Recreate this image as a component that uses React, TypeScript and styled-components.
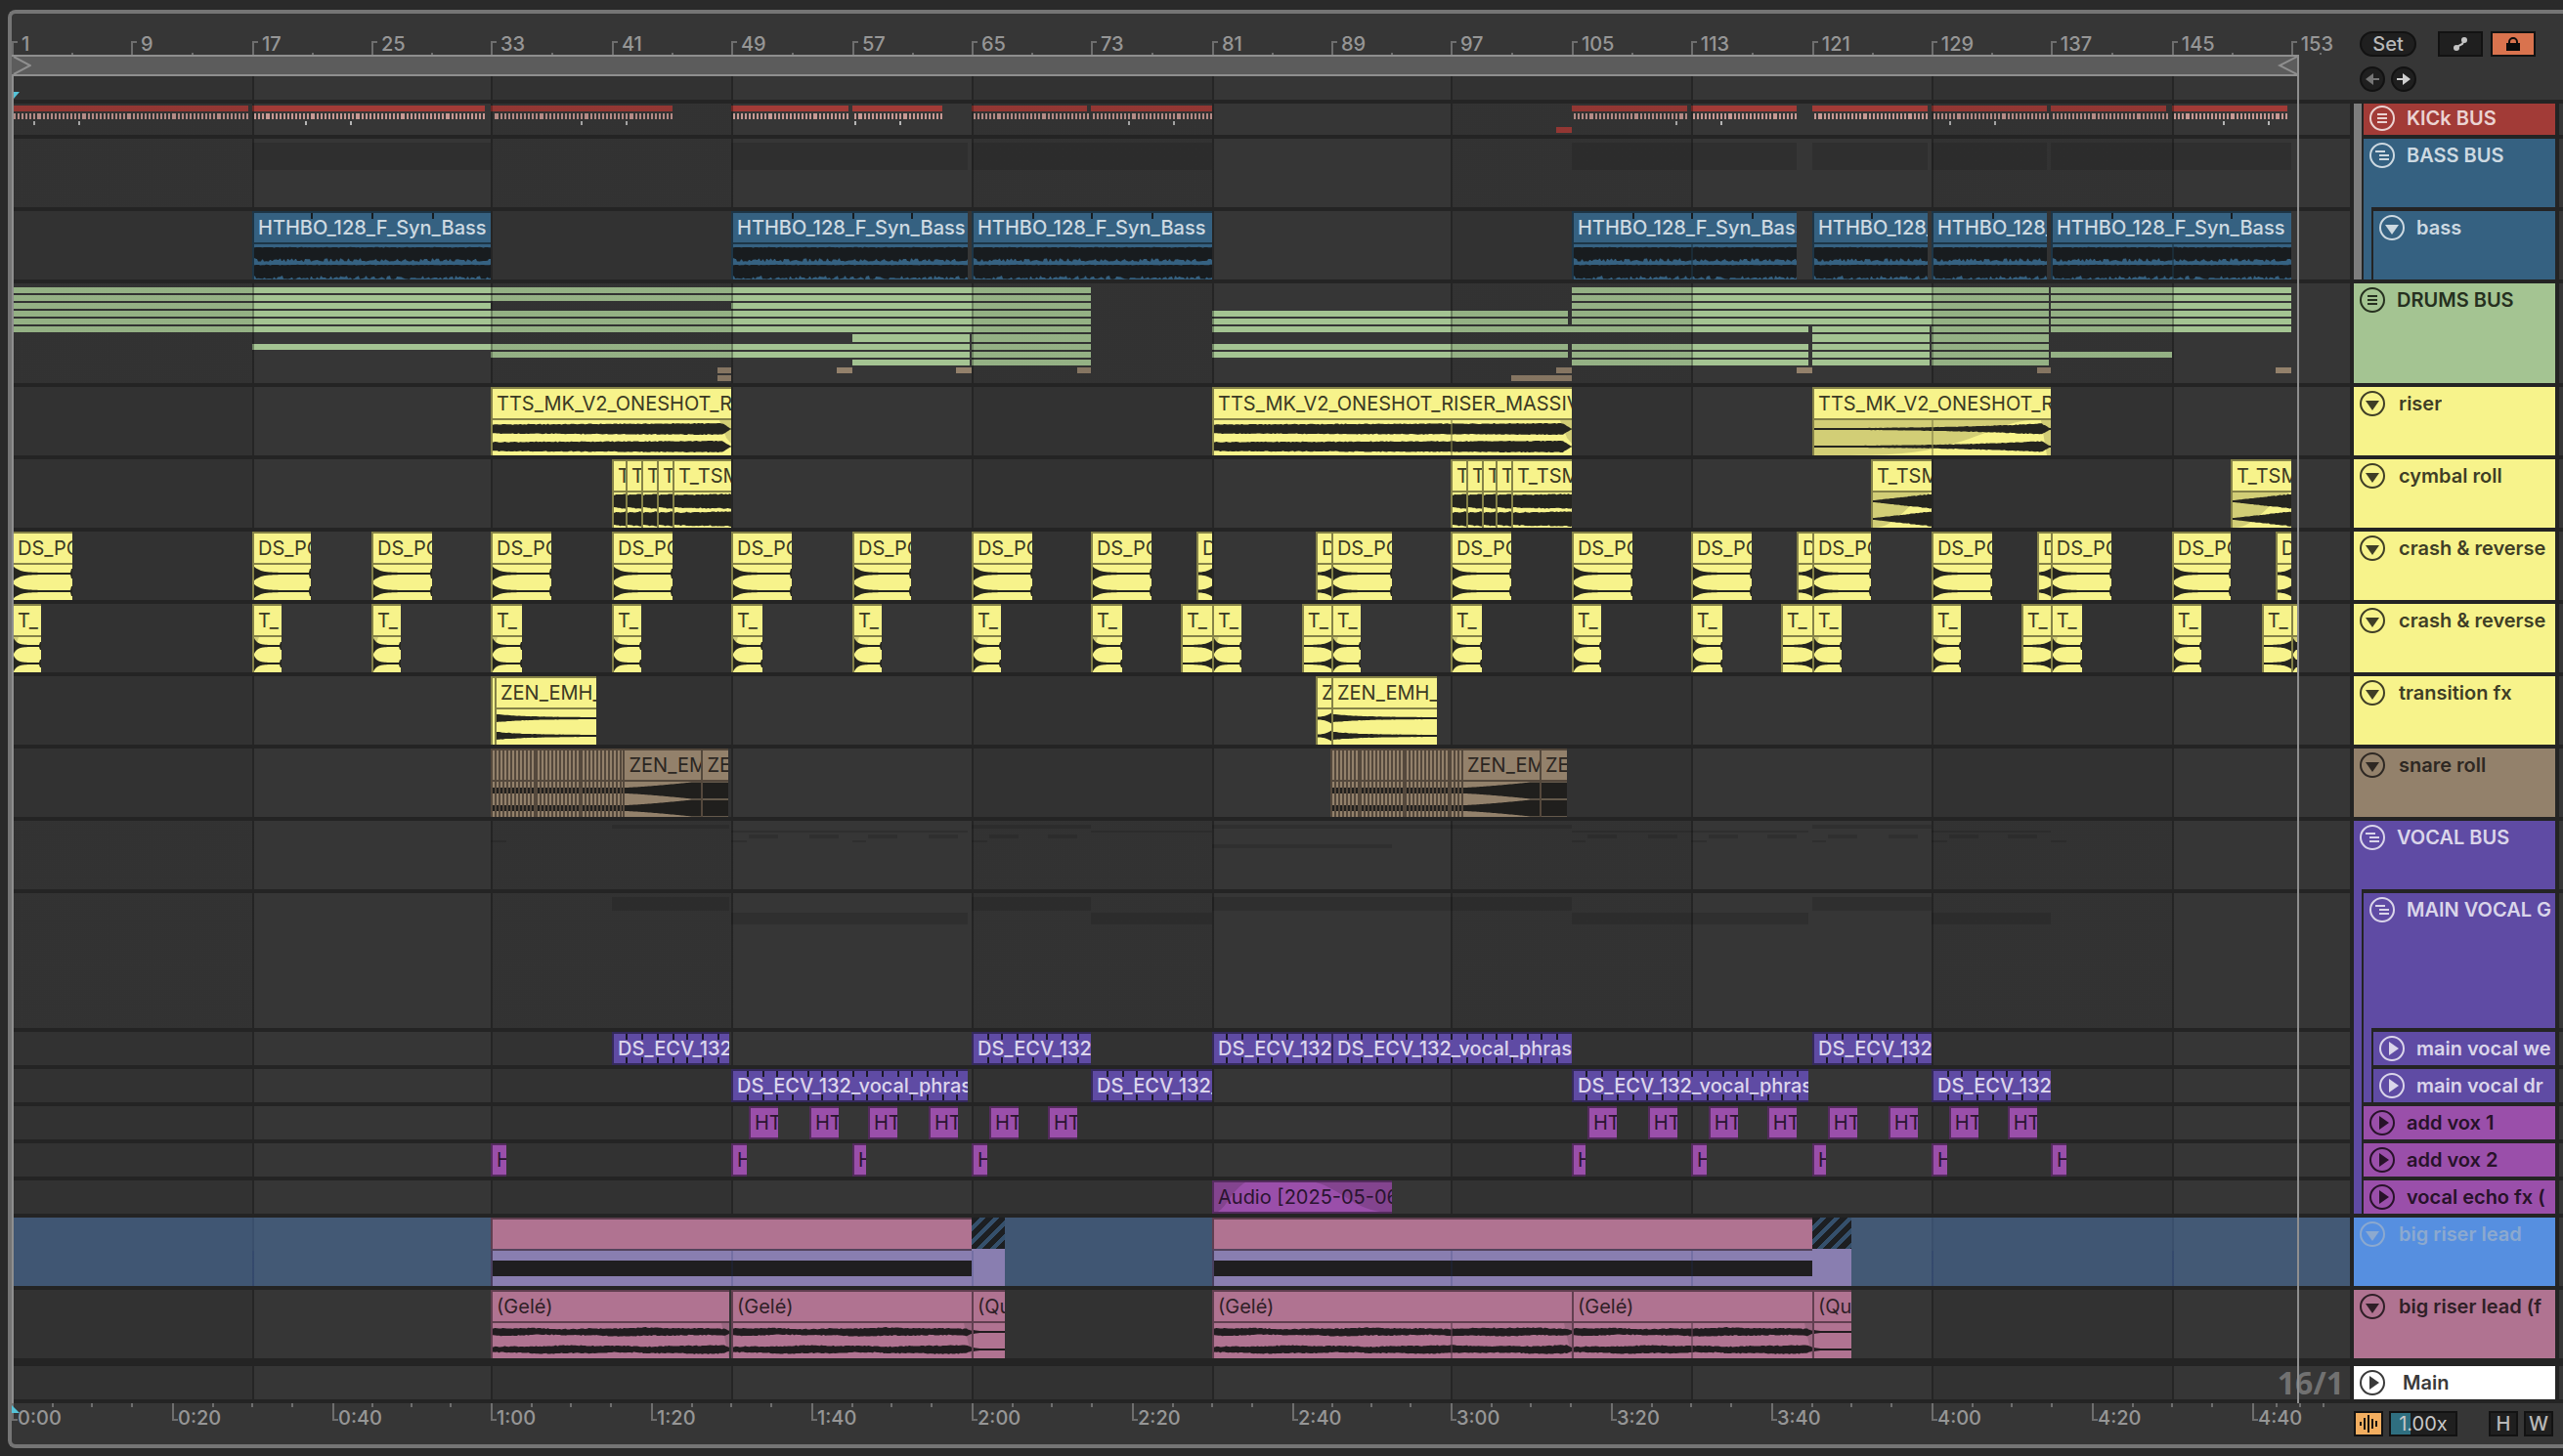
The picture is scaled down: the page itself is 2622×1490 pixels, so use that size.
import React from 'react';
import styled, { createGlobalStyle } from 'styled-components';

/* ---------- time scale ---------- */

const LANE = 2392;
const BAR = 15.34375;
const px = (bar: number) => Math.floor((0.5 + (bar - 1) * BAR) / 2 + 0.2) * 2;
const pct = (n: number) => `${(n / LANE) * 100}%`;

/* ---------- palette ---------- */

const c = {
  page: '#2a2a2a',
  panel: '#363636',
  dim: '#323232',
  gap: '#242424',
  frame: '#757575',
  edge: '#8f8f8f',
  label: '#969696',
  red: '#a23b37',
  blue: '#356181',
  green: '#a4c492',
  yellow: '#f7f38b',
  brown: '#93816b',
  purple: '#5f4ba4',
  magenta: '#9a4faa',
  sky: '#568fe0',
  pink: '#b07391',
};

type Tone = { bg: string; edge: string; wave: string; text: string; fade: string };
const tones: Record<string, Tone> = {
  blue: { bg: c.blue, edge: '#1d3546', wave: '#181c1f', text: '#cdd9e1', fade: '#2b506b' },
  yellow: { bg: c.yellow, edge: '#858248', wave: '#25251f', text: '#3b3a24', fade: '#d2ce76' },
  brown: { bg: c.brown, edge: '#54483c', wave: '#201f1d', text: '#2b2622', fade: '#7d6e5b' },
  purple: { bg: c.purple, edge: '#34295c', wave: '#1b1926', text: '#dcd6ec', fade: '#514089' },
  magenta: { bg: c.magenta, edge: '#542b5e', wave: '#1b1926', text: '#2a1430', fade: '#83448f' },
  pink: { bg: c.pink, edge: '#613f50', wave: '#211c1f', text: '#2f1f27', fade: '#9a6680' },
};

const stripes = (dark: string, light: string, line: string) => {
  const parts: string[] = [];
  for (let i = 0; i < 10; i++) {
    const from = i === 0 ? 0 : px(1 + i * 16);
    const to = i === 9 ? LANE : px(17 + i * 16);
    const tint = i % 2 ? light : dark;
    if (i) parts.push(`${line} ${pct(from)} ${pct(from + 2)}`);
    parts.push(`${tint} ${pct(i ? from + 2 : 0)} ${pct(to)}`);
  }
  return `linear-gradient(90deg, ${parts.join(', ')})`;
};
const laneStripes = stripes(c.dim, c.panel, '#252525');
const overStripes = stripes('rgba(20,20,20,.11)', 'rgba(20,20,20,0)', 'rgba(0,0,0,.33)');
const skyStripes = stripes('#405673', '#435975', '#3a4f6c');
const takeLines = stripes('rgba(30,50,110,0)', 'rgba(30,50,110,0)', 'rgba(30,50,110,.2)');

/* ---------- shell ---------- */

const Global = createGlobalStyle`
  body { margin: 0; background: ${c.page}; }
  * { box-sizing: border-box; }
  button, input { font: inherit; padding: 0; margin: 0; }
`;

const Page = styled.main`
  padding: 10px 0 8px 8px;
  background: ${c.page};
  font-family: Inter, "Liberation Sans", sans-serif;
  font-size: 20px;
  line-height: 30px;
  overflow: hidden;
`;

const Frame = styled.section`
  display: grid;
  grid-template-columns: minmax(0, 1fr) 206px 4px;
  column-gap: 4px;
  border: 4px solid ${c.frame};
  border-right: 0;
  border-radius: 8px 0 0 8px;
  background: ${c.panel};
`;

const Timeline = styled.div`
  position: relative;
  min-width: 0;
`;

const Stack = styled.div`
  display: flex;
  flex-direction: column;
  gap: 4px;
  padding: 4px 0;
  background: ${c.gap};
`;

const Body = styled(Stack)`
  box-shadow: 4px 0 0 ${c.gap};
`;

/* ---------- rulers ---------- */

const Ruler = styled.div`
  display: flex;
  height: 42px;
  color: ${c.label};
  font-weight: 500;
  overflow: hidden;
`;

const BarCell = styled.div`
  position: relative;
  flex: none;
  padding: 16px 0 0 10px;
  &::before {
    content: '';
    position: absolute;
    left: 0;
    bottom: 0;
    width: 4px;
    height: 12px;
    border: solid #6e6e6e;
    border-width: 2px 0 0 2px;
  }
  &::after {
    content: '';
    position: absolute;
    left: 50%;
    bottom: 0;
    width: 2px;
    height: 2px;
    background: #6e6e6e;
  }
`;

const TimeCell = styled.div`
  position: relative;
  flex: none;
  padding-left: 6px;
  white-space: nowrap;
  &::before {
    content: '';
    position: absolute;
    left: 0;
    top: 0;
    width: 4px;
    height: 16px;
    border: solid #6e6e6e;
    border-width: 0 0 2px 2px;
  }
  &::after {
    content: '';
    position: absolute;
    inset: 0 0 auto 0;
    height: 4px;
    background:
      linear-gradient(#6e6e6e, #6e6e6e) 25% 0 / 2px 4px no-repeat,
      linear-gradient(#6e6e6e, #6e6e6e) 50% 0 / 2px 4px no-repeat,
      linear-gradient(#6e6e6e, #6e6e6e) 75% 0 / 2px 4px no-repeat;
  }
`;

const LoopBar = styled.div`
  display: flex;
  justify-content: space-between;
  height: 22px;
  border: solid ${c.edge};
  border-width: 2px 2px 2px 0;
  background: #5c5c5c;
`;

const Scrub = styled.div`
  display: flex;
  height: 24px;
  padding: 16px 0 0 2px;
  background: ${laneStripes};
`;

const StartLine = styled.div`
  position: absolute;
  left: 0;
  top: 64px;
  bottom: 42px;
  width: 2px;
  background: ${c.edge};
`;

const EndLine = styled.div`
  position: absolute;
  top: 42px;
  bottom: 42px;
  width: 2px;
  background: ${c.edge};
`;

const StartFlag = styled.svg`
  position: absolute;
  left: 0;
  bottom: 32px;
`;

/* ---------- lanes ---------- */

const Lane = styled.div<{ $h: number; $sky?: boolean }>`
  position: relative;
  display: flex;
  flex: none;
  height: ${(p) => p.$h}px;
  background: ${(p) => (p.$sky ? skyStripes : laneStripes)};
  overflow: hidden;
`;

const OverLane = styled(Lane)`
  flex-direction: column;
  background: ${c.panel};
  &::after {
    content: '';
    position: absolute;
    inset: 0;
    background: ${overStripes};
  }
`;

const MiniRow = styled.div<{ $h: number; $gap: number }>`
  display: flex;
  flex: none;
  height: ${(p) => p.$h}px;
  margin-top: ${(p) => p.$gap}px;
`;

const Mini = styled.span<{ $color: string }>`
  flex: none;
  background: ${(p) => p.$color};
`;

const ClipBox = styled.article<{ $tone: Tone; $low?: boolean }>`
  display: flex;
  flex-direction: column;
  flex: none;
  min-width: 0;
  overflow: hidden;
  color: ${(p) => p.$tone.text};
  background: ${(p) => p.$tone.bg};
  border: solid ${(p) => p.$tone.edge};
  border-width: ${(p) => (p.$low ? '2px 0 2px 2px' : '2px 0 0 2px')};
`;

const ClipTitle = styled.div<{ $strong?: boolean }>`
  position: relative;
  flex: none;
  height: 30px;
  padding-left: 4px;
  font-weight: ${(p) => (p.$strong ? 500 : 400)};
  white-space: nowrap;
  overflow: hidden;
`;

const ClipText = styled.span`
  position: relative;
`;

const Marks = styled.svg`
  position: absolute;
  inset: 0;
  width: 100%;
  height: 100%;
`;

const WaveBox = styled.svg<{ $edge: string }>`
  display: block;
  flex: none;
  width: 100%;
  height: 38px;
  border-top: 2px solid ${(p) => p.$edge};
`;

const TakeLines = styled.div`
  position: absolute;
  inset: auto 0 0 0;
  height: 36px;
  background: ${takeLines};
`;

/* ---------- wave drawing ---------- */

type Kind =
  | 'bass' | 'riser' | 'riserIn' | 'roll' | 'rollIn' | 'crash' | 'reverse'
  | 'zen' | 'swell' | 'full' | 'lead' | 'thin' | 'hit' | 'slice';

const noise = (i: number, s: number) => {
  const v = Math.sin(i * 12.9898 + s * 78.233) * 43758.5453;
  return v - Math.floor(v);
};

const amp = (k: Kind, x: number, w: number, s: number): number => {
  const t = x / w;
  const n = noise(Math.floor(x / 2), s);
  const slow = Math.sin(x / 23 + s) * 0.5 + Math.sin(x / 9 + s * 3) * 0.3;
  const tail = Math.min(1, (w - x) / 9);
  switch (k) {
    case 'bass': return 6.6 + n * 0.6;
    case 'riser': return Math.max(0.6, (4.2 + t * 1.2 + n * 0.8) * tail);
    case 'riserIn': return Math.max(0.9, (0.9 + Math.pow(t, 2.6) * 4.6 + n * t * 0.8) * tail);
    case 'roll': return 6 + t * 0.9 + n;
    case 'rollIn': return 0.9 + t * 6 + n * t;
    case 'crash': return x > w - 2 ? 5 : 1 + 6.2 * Math.exp(-x / 6.5);
    case 'hit': return x > w - 2 ? 4 : 1 + 7 * Math.exp(-x / 3.5);
    case 'reverse': return 1 + 4.6 * Math.exp(-(w - x) / 5.5);
    case 'zen': return 1 + 2.9 * Math.exp(-x / 26) + n * 0.5 * (1 - t);
    case 'swell': return Math.min(8.6, 3 + 6.5 * Math.pow(t, 1.3));
    case 'full': return 8.4;
    case 'lead': return Math.max(0.8, (2.9 + slow + t * 0.5 + n * 0.9) * Math.min(1, (w - x + 4) / 9));
    case 'thin': return 1 + Math.exp(-x / 3);
    case 'slice': return 3;
  }
};

const wavePath = (k: Kind, w: number, mid: number, s: number) => {
  const top: string[] = [];
  const bottom: string[] = [];
  for (let x = 0; x <= w; x++) {
    top.push(`${x} ${(mid - amp(k, x, w, s)).toFixed(1)}`);
    const skew = k === 'bass' ? 0.6 - Math.pow(noise(Math.floor(x / 2), s + 5), 2) * 3.2 : 0;
    bottom.unshift(`${x} ${(mid + amp(k, x, w, s + 1) + skew).toFixed(1)}`);
  }
  return `M${top.join('L')}L${bottom.join('L')}Z`;
};

const fadePath = (k: Kind, w: number): string | null => {
  switch (k) {
    case 'riserIn': return `M0 0H${w - 20}C${w * 0.8} 2 ${w * 0.72} 16 ${w * 0.56} 26S${w * 0.3} 36 0 36ZM${w - 10} 0H${w}V36L${w - 4} 36Z`;
    case 'rollIn': return `M0 0H${w - 2}C${w * 0.75} 4 ${w * 0.65} 14 ${w * 0.45} 24S${w * 0.15} 36 0 36Z`;
    case 'riser': return `M${w - 12} 0H${w}V24L${w - 5} 18Z`;
    case 'lead': return `M${w - 8} 0H${w}V36Z`;
    case 'hit': return 'M0 0H5L0 14Z';
    default: return null;
  }
};

const gridLines = Array.from({ length: 9 }, (_, i) => px(17 + i * 16));

const Wave = ({ kind, from, to, tone }: { kind: Kind; from: number; to: number; tone: Tone }) => {
  const w = Math.max(2, to - from - 2);
  const mid = kind === 'bass' ? [10, 28] : [9, 27];
  const fade = fadePath(kind, w);
  const lines = gridLines.map((g) => g - from - 2).filter((x) => x > 0 && x < w - 1);
  return (
    <WaveBox $edge={tone.edge} viewBox={`0 0 ${w} 36`} preserveAspectRatio="none" aria-hidden>
      {fade && <path d={fade} fill={tone.fade} />}
      {mid.map((m, i) => (
        <path key={m} d={wavePath(kind, w, m, i * 3 + 1)} fill={tone.wave} />
      ))}
      {lines.map((x) => (
        <rect key={x} x={x} y={0} width={2} height={36} fill={tone.edge} opacity={0.6} />
      ))}
    </WaveBox>
  );
};

/* ---------- clips ---------- */

type ClipData = { a: number; b: number; name?: string; kind?: Kind };

const flow = <T extends { a: number; b: number }>(items: T[]) => {
  let at = 0;
  return items.map((it) => {
    const from = px(it.a);
    const to = Math.max(from + 2, px(it.b));
    const style = { marginLeft: pct(from - at), width: pct(to - from) };
    at = to;
    return { it, style, from, to };
  });
};

const ClipMarks = ({ from, to, every, both, color }: { from: number; to: number; every: number; both?: boolean; color: string }) => {
  const w = to - from - 2;
  const xs: number[] = [];
  for (let b = 1; b < 154; b += every) {
    const x = px(b) - from - 2;
    if (x > 4 && x < w - 1) xs.push(x);
  }
  return (
    <Marks viewBox={`0 0 ${w} 30`} preserveAspectRatio="none" aria-hidden>
      {xs.map((x) => (
        <g key={x} fill={color}>
          <rect x={x} y={0} width={2} height={6} />
          {both && <rect x={x} y={24} width={2} height={6} />}
        </g>
      ))}
    </Marks>
  );
};

const ClipLane = ({ clips, tone, h = 70, marks }: { clips: ClipData[]; tone: Tone; h?: number; marks?: number }) => (
  <Lane $h={h}>
    {flow(clips).map(({ it, style, from, to }, i) => (
      <ClipBox key={i} $tone={tone} $low={h < 70} style={style}>
        <ClipTitle $strong={tone === tones.blue || tone === tones.purple}>
          {marks && <ClipMarks from={from} to={to} every={marks} both={h < 70} color={tone.wave} />}
          {it.name && <ClipText>{it.name}</ClipText>}
        </ClipTitle>
        {it.kind && <Wave kind={it.kind} from={from} to={to} tone={tone} />}
      </ClipBox>
    ))}
  </Lane>
);

type Seg = [number, number];
const MiniLine = ({ segs, color, h, gap }: { segs: Seg[]; color: string; h: number; gap: number }) => (
  <MiniRow $h={h} $gap={gap}>
    {flow(segs.map(([a, b]) => ({ a, b }))).map(({ style }, i) => (
      <Mini key={i} $color={color} style={style} />
    ))}
  </MiniRow>
);

/* ---------- arrangement data ---------- */

const kick: Seg[] = [
  [1, 16.72], [17, 32.6], [33, 45], [49, 56.75], [57, 63], [65, 72.7], [73, 81], [105, 112.7],
  [113, 120], [121, 128.7], [129, 136.7], [137, 144.7], [145, 152.7],
];
const kickFills = [2.4, 5.4, 20.6, 23.6, 38.9, 41.9, 57.2, 60.2, 75.4, 78.4, 111.9, 114.9, 130.2, 133.2, 148.4, 151.4];

const bassSegs: Seg[] = [[17, 33], [49, 64.75], [65, 81], [105, 120], [121, 128.75], [129, 136.7], [137, 153]];

const A: Seg[] = [[105, 136.85], [137, 153]];
const B: Seg[] = [[81, 104.75], [105, 120.85], [121, 128.85], [129, 136.85]];
const drumRows: { segs: Seg[]; h: number; gap: number; color: string }[] = [
  { segs: [[1, 73], ...A], h: 6, gap: 4, color: c.green },
  { segs: [[1, 73], ...A], h: 6, gap: 2, color: c.green },
  { segs: [[1, 33], [49, 73], ...A], h: 6, gap: 2, color: c.green },
  { segs: [[1, 73], [81, 104.75], ...A], h: 6, gap: 2, color: c.green },
  { segs: [[1, 73], [81, 104.75], ...A], h: 6, gap: 2, color: c.green },
  { segs: [[1, 73], [81, 120.85], [121, 128.85], [129, 136.85], [137, 153]], h: 6, gap: 2, color: c.green },
  { segs: [[57, 64.85], [65, 73], [121, 128.85], [129, 136.85]], h: 8, gap: 2, color: c.green },
  { segs: [[17, 64.85], [65, 73], ...B], h: 6, gap: 2, color: c.green },
  { segs: [[33, 64.85], [65, 73], ...B, [137, 145]], h: 6, gap: 2, color: c.green },
  { segs: [[57, 64.85], [65, 73], [105, 120.85], [121, 128.85], [129, 136.85]], h: 6, gap: 2, color: c.green },
  { segs: [[48.1, 49], [56, 57], [64, 65], [72.1, 73], [104, 105], [120, 121], [136.1, 137], [152, 153]], h: 6, gap: 2, color: c.brown },
  { segs: [[48.1, 49], [101, 105]], h: 6, gap: 2, color: c.brown },
];

const bassClips: ClipData[] = bassSegs.map(([a, b]) => ({ a, b, name: 'HTHBO_128_F_Syn_Bass', kind: 'bass' }));

const riserClips: ClipData[] = [
  { a: 33, b: 49, name: 'TTS_MK_V2_ONESHOT_RISER', kind: 'riser' },
  { a: 81, b: 105, name: 'TTS_MK_V2_ONESHOT_RISER_MASSIVE', kind: 'riser' },
  { a: 121, b: 137, name: 'TTS_MK_V2_ONESHOT_RISER', kind: 'riserIn' },
];

const roll = (s: number): ClipData[] => [
  ...[0, 1, 2, 3].map((i): ClipData => ({ a: s + i, b: s + i + 1, name: 'T', kind: 'roll' })),
  { a: s + 4, b: s + 8, name: 'T_TSM', kind: 'roll' },
];
const cymbalClips: ClipData[] = [
  ...roll(41),
  ...roll(97),
  { a: 125, b: 129, name: 'T_TSM', kind: 'rollIn' },
  { a: 149, b: 153, name: 'T_TSM', kind: 'rollIn' },
];

const sorted = (list: ClipData[]) => [...list].sort((x, y) => x.a - y.a);
const hits = [1, 17, 25, 33, 41, 49, 57, 65, 73, 89, 97, 105, 113, 121, 129, 137, 145];
const crashClips = sorted([
  ...hits.map((a): ClipData => ({ a, b: a + 4, name: 'DS_PO', kind: 'crash' })),
  ...[80, 88, 120, 136, 152].map((a): ClipData => ({ a, b: a + 1, name: 'D', kind: 'reverse' })),
]);
const crashClips2 = sorted([
  ...[...hits, 81].map((a): ClipData => ({ a, b: a + 2, name: 'T_', kind: 'hit' })),
  ...[79, 87, 119, 135, 151].map((a): ClipData => ({ a, b: a + 2, name: 'T_', kind: 'reverse' })),
  { a: 153, b: 153.4, kind: 'hit' },
]);

const fxClips: ClipData[] = [
  { a: 33, b: 33.2 },
  { a: 33.2, b: 40, name: 'ZEN_EMH_', kind: 'zen' },
  { a: 88, b: 89, name: 'Z', kind: 'reverse' },
  { a: 89, b: 96, name: 'ZEN_EMH_', kind: 'zen' },
];

const snareRun = (s: number): ClipData[] => [
  ...Array.from({ length: 35 }, (_, i): ClipData => ({ a: s + i * 0.25, b: s + (i + 1) * 0.25, kind: 'slice' })),
  { a: s + 8.75, b: s + 14, name: 'ZEN_EMH', kind: 'swell' },
  { a: s + 14, b: s + 15.8, name: 'ZEN', kind: 'full' },
];
const snareClips = [...snareRun(33), ...snareRun(89)];

const wet: Seg[] = [[41, 48.8], [65, 73], [81, 89], [89, 105], [121, 129]];
const dry: Seg[] = [[49, 64.75], [73, 81], [105, 120.75], [129, 137]];
const busWet: Seg[] = [[41, 48.8], [65, 73], [81, 105], [121, 129]];
const vox1: Seg[] = [50.1, 54.2, 58.1, 62.1, 66.2, 70.1, 106.1, 110.1, 114.2, 118.1, 122.1, 126.2, 130.2, 134.1].map(
  (a): Seg => [a, a + 1.95],
);
const vox2: Seg[] = [33, 49, 57, 65, 105, 113, 121, 129, 137].map((a): Seg => [a, a + 1]);
const phrase = 'DS_ECV_132_vocal_phrase';
const named = (segs: Seg[], name: string): ClipData[] => segs.map(([a, b]) => ({ a, b, name }));

const leadClips: ClipData[] = [
  { a: 33, b: 48.8, name: '(Gelé)', kind: 'lead' },
  { a: 49, b: 65, name: '(Gelé)', kind: 'lead' },
  { a: 65, b: 67.2, name: '(Qu', kind: 'thin' },
  { a: 81, b: 105, name: '(Gelé)', kind: 'lead' },
  { a: 105, b: 121, name: '(Gelé)', kind: 'lead' },
  { a: 121, b: 123.7, name: '(Qu', kind: 'thin' },
];

/* ---------- special lanes ---------- */

const Notes = styled.svg`
  display: block;
  flex: none;
  width: 100%;
  height: 12px;
  margin-top: 2px;
`;

const KickLane = () => {
  const beats: number[] = [];
  kick.forEach(([a, b]) => {
    for (let t = a; t < b - 0.1; t += 0.25) beats.push(Math.round((2 + (t - 1) * BAR) / 2) * 2);
  });
  return (
    <OverLane $h={32}>
      <MiniLine segs={kick} color={c.red} h={6} gap={2} />
      <Notes viewBox={`0 0 ${LANE} 12`} preserveAspectRatio="none" aria-hidden>
        {beats.map((x) => (
          <rect key={x} x={x} y={0} width={2} height={6} fill="#c79994" />
        ))}
        {kickFills.map((b) => (
          <rect key={b} x={px(b)} y={8} width={2} height={4} fill="#b5b5b5" />
        ))}
      </Notes>
      <MiniLine segs={[[104, 105]]} color={c.red} h={6} gap={2} />
    </OverLane>
  );
};

const shade = 'rgba(0,0,0,.12)';

const EchoLane = () => {
  const [{ style, from, to }] = flow([{ a: 81, b: 93 }]);
  const w = to - from - 2;
  return (
    <Lane $h={34}>
      <ClipBox $tone={tones.magenta} $low style={style}>
        <ClipTitle>
          <Marks viewBox={`0 0 ${w} 30`} preserveAspectRatio="none" aria-hidden>
            <path d="M0 0H32C18 8 14 24 4 30H0Z" fill={tones.magenta.fade} />
            <path d={`M${w - 78} 0H${w}V30H${w - 12}C${w - 40} 26 ${w - 54} 6 ${w - 78} 0Z`} fill={tones.magenta.fade} />
          </Marks>
          <ClipText>Audio [2025-05-06</ClipText>
        </ClipTitle>
      </ClipBox>
    </Lane>
  );
};

const TakeBox = styled.div`
  display: grid;
  flex: none;
  grid-template-rows: 32px 38px;
`;

const TakeHead = styled.div`
  background: ${c.pink};
  border: solid #613f50;
  border-width: 2px 0 0 2px;
`;

const Hatch = styled.div`
  background: repeating-linear-gradient(135deg, #1d1f22 0 6px, #35506c 6px 10px);
`;

const TakeBody = styled.div`
  border: solid #54435c;
  border-width: 2px 0 0 2px;
  background: linear-gradient(#897eb0 0 10px, #1f1e20 10px 26px, #897eb0 26px);
`;

const TakeRest = styled.div`
  background: #897eb0;
`;

const SkyLane = () => (
  <Lane $h={70} $sky>
    {flow([
      { a: 33, b: 65, rest: false },
      { a: 65, b: 67.2, rest: true },
      { a: 81, b: 121, rest: false },
      { a: 121, b: 123.7, rest: true },
    ]).map(({ it, style }) => (
      <TakeBox key={it.a} style={style}>
        {it.rest ? <Hatch /> : <TakeHead />}
        {it.rest ? <TakeRest /> : <TakeBody />}
      </TakeBox>
    ))}
    <TakeLines />
  </Lane>
);

const MainLane = styled(Lane)`
  margin-top: 4px;
  justify-content: flex-end;
  align-items: center;
  padding-right: 6px;
  color: #717171;
  font-family: "Noto Sans", sans-serif;
  font-size: 32px;
  font-weight: 700;
`;

/* ---------- track headers ---------- */

const Headers = styled(Stack)`
  min-width: 0;
  box-shadow: 4px 0 0 ${c.gap};
`;

const HeadRow = styled.div<{ $h: number; $bg: string; $fg: string; $gap: number }>`
  display: flex;
  align-items: flex-start;
  gap: ${(p) => p.$gap}px;
  flex: none;
  height: ${(p) => p.$h}px;
  padding: ${(p) => (p.$h < 34 ? 2 : 4)}px 0 0 6px;
  background: ${(p) => p.$bg};
  color: ${(p) => p.$fg};
  overflow: hidden;
`;

const Name = styled.span`
  font-weight: 600;
  line-height: 26px;
  white-space: nowrap;
  overflow: hidden;
`;

const FoldButton = styled.button`
  flex: none;
  width: 26px;
  height: 26px;
  border: 0;
  background: none;
  color: inherit;
`;

const Icon = styled.svg`
  display: block;
`;

const Group = styled.div<{ $bg: string }>`
  background: ${(p) => p.$bg};
`;

const Nested = styled.div`
  display: flex;
  flex-direction: column;
  gap: 4px;
  margin-left: 8px;
  padding: 4px 0 0 2px;
  background: ${c.gap};
`;

const OuterGroup = styled(Group)`
  & > ${Nested} {
    padding-top: 0;
  }
`;

type Glyph = 'menu' | 'group' | 'down' | 'play';
const FoldIcon = ({ glyph }: { glyph: Glyph }) => (
  <Icon width="26" height="26" viewBox="0 0 26 26" fill="none" stroke="currentColor" strokeWidth="2" aria-hidden>
    <circle cx="13" cy="13" r="12" />
    {glyph === 'menu' && <path d="M8 9H18M8 13H18M8 17H18" />}
    {glyph === 'group' && <path d="M6 9H16M10 13H20M10 17H20" />}
    {glyph === 'down' && <path d="M6 10H20L13 20Z" fill="currentColor" stroke="none" />}
    {glyph === 'play' && <path d="M10 6V20L20 13Z" fill="currentColor" stroke="none" />}
  </Icon>
);

const Head = ({ h = 70, gap = 12, bg, fg, glyph, name }: { h?: number; gap?: number; bg: string; fg: string; glyph: Glyph; name: string }) => (
  <HeadRow $h={h} $gap={gap} $bg={bg} $fg={fg}>
    <FoldButton type="button" aria-label={`Fold ${name}`}>
      <FoldIcon glyph={glyph} />
    </FoldButton>
    <Name>{name}</Name>
  </HeadRow>
);

const MainHead = styled.div`
  margin-top: 4px;
`;

/* ---------- corner controls ---------- */

const Corner = styled.div`
  display: grid;
  align-content: start;
  gap: 10px;
  height: 88px;
  padding: 18px 20px 0 6px;
`;

const Cluster = styled.div<{ $gap: number }>`
  display: flex;
  gap: ${(p) => p.$gap}px;
`;

const Push = styled(Cluster)`
  margin-left: auto;
`;

const Button = styled.button<{ $w: number; $round?: boolean; $bg?: string; $fg?: string }>`
  display: grid;
  place-items: center;
  flex: none;
  width: ${(p) => p.$w}px;
  height: 26px;
  border: 2px solid #121212;
  border-radius: ${(p) => (p.$round ? 13 : 0)}px;
  background: ${(p) => p.$bg ?? '#1f1f1f'};
  color: ${(p) => p.$fg ?? '#b8b8b8'};
  font-weight: 500;
  line-height: 22px;
`;

const Footer = styled.div`
  display: flex;
  align-items: flex-start;
  height: 42px;
  padding: 8px 2px 0 0;
  gap: 6px;
`;

const Speed = styled.input`
  width: 70px;
  height: 26px;
  border: 2px solid #121212;
  border-radius: 0;
  background: linear-gradient(90deg, #2f6f80 0 20px, #1f1f1f 20px);
  color: #c8c8c8;
  text-align: center;
`;

const EdgeLane = styled.div<{ $h: number }>`
  flex: none;
  height: ${(p) => p.$h}px;
  background: ${c.panel};
`;

const EdgeMain = styled(EdgeLane)`
  margin-top: 4px;
`;

const Spacer = styled.div`
  height: 88px;
`;

const rowHeights = [32, 70, 70, 102, 70, 70, 70, 70, 70, 70, 70, 138, 34, 34, 34, 34, 34, 70, 70];

const ink = { yellow: '#3f3e26', purple: '#dad5ea', magenta: '#271229', blue: '#cdd9e1' };

export default function App() {
  return (
    <>
      <Global />
      <Page>
        <Frame>
          <Timeline>
            <Ruler>
              {flow(Array.from({ length: 20 }, (_, i) => ({ a: 1 + i * 8, b: Math.min(9 + i * 8, 156.8) }))).map(({ it, style }) => (
                <BarCell key={it.a} style={style}>{it.a}</BarCell>
              ))}
            </Ruler>
            <LoopBar style={{ width: pct(2340) }}>
              <svg width="20" height="18" viewBox="0 0 20 18" fill="none" stroke={c.edge} strokeWidth="2" aria-hidden>
                <path d="M2 0L19 9L2 18" />
              </svg>
              <svg width="20" height="18" viewBox="0 0 20 18" fill="none" stroke={c.edge} strokeWidth="2" aria-hidden>
                <path d="M20 0L2 9L20 18" />
              </svg>
            </LoopBar>
            <Scrub>
              <svg width="6" height="7" viewBox="0 0 6 7" aria-hidden>
                <path d="M0 0H6L0 7Z" fill="#55c3d8" />
              </svg>
            </Scrub>
            <Body>
              <KickLane />
              <OverLane $h={70}>
                <MiniLine segs={bassSegs} color={shade} h={28} gap={4} />
              </OverLane>
              <ClipLane clips={bassClips} tone={tones.blue} marks={4} />
              <OverLane $h={102}>
                {drumRows.map((r, i) => <MiniLine key={i} {...r} />)}
              </OverLane>
              <ClipLane clips={riserClips} tone={tones.yellow} />
              <ClipLane clips={cymbalClips} tone={tones.yellow} />
              <ClipLane clips={crashClips} tone={tones.yellow} />
              <ClipLane clips={crashClips2} tone={tones.yellow} />
              <ClipLane clips={fxClips} tone={tones.yellow} />
              <ClipLane clips={snareClips} tone={tones.brown} />
              <OverLane $h={70}>
                <MiniLine segs={busWet} color={shade} h={4} gap={4} />
                <MiniLine segs={dry} color={shade} h={2} gap={2} />
                <MiniLine segs={vox1} color={shade} h={4} gap={2} />
                <MiniLine segs={vox2} color={shade} h={2} gap={2} />
                <MiniLine segs={[[81, 93]]} color={shade} h={4} gap={2} />
              </OverLane>
              <OverLane $h={138}>
                <MiniLine segs={busWet} color={shade} h={14} gap={4} />
                <MiniLine segs={dry} color={shade} h={12} gap={2} />
              </OverLane>
              <ClipLane clips={named(wet, phrase)} tone={tones.purple} h={34} marks={1} />
              <ClipLane clips={named(dry, phrase)} tone={tones.purple} h={34} marks={1} />
              <ClipLane clips={named(vox1, 'HT')} tone={tones.magenta} h={34} />
              <ClipLane clips={named(vox2, 'H')} tone={tones.magenta} h={34} />
              <EchoLane />
              <SkyLane />
              <ClipLane clips={leadClips} tone={tones.pink} />
              <MainLane $h={34}>16/1</MainLane>
            </Body>
            <Ruler>
              {flow(Array.from({ length: 15 }, (_, i) => ({ a: 1 + (i * 32) / 3, b: Math.min(1 + ((i + 1) * 32) / 3, 156.8), i }))).map(({ it, style }) => (
                <TimeCell key={it.i} style={style}>
                  {`${Math.floor(it.i / 3)}:${['00', '20', '40'][it.i % 3]}`}
                </TimeCell>
              ))}
            </Ruler>
            <StartLine />
            <EndLine style={{ left: pct(2338) }} />
            <StartFlag width="8" height="8" viewBox="0 0 8 8" aria-hidden>
              <path d="M0 0L8 8H0Z" fill="#55c3d8" />
            </StartFlag>
          </Timeline>

          <div>
            <Corner>
              <Cluster $gap={8}>
                <Button type="button" $w={58} $round>Set</Button>
                <Push $gap={8}>
                  <Button type="button" $w={46} aria-label="Automation mode">
                    <svg width="16" height="16" viewBox="0 0 16 16" fill="#c4c4c4" aria-hidden>
                      <circle cx="12" cy="4" r="3" />
                      <circle cx="4" cy="12" r="3" />
                      <path d="M12 4L10 8L6 10L4 12" stroke="#c4c4c4" strokeWidth="2" fill="none" />
                    </svg>
                  </Button>
                  <Button type="button" $w={46} $bg="#d9734e" $fg="#0c0c0c" aria-label="Lock envelopes">
                    <svg width="16" height="16" viewBox="0 0 16 16" aria-hidden>
                      <rect x="1" y="7" width="14" height="8" fill="#0c0c0c" />
                      <path d="M4 8V6a4 4 0 0 1 8 0V8" fill="none" stroke="#0c0c0c" strokeWidth="2" />
                    </svg>
                  </Button>
                </Push>
              </Cluster>
              <Cluster $gap={6}>
                <Button type="button" $w={26} $round $fg="#757575" aria-label="Previous locator">
                  <svg width="16" height="14" viewBox="0 0 16 14" fill="currentColor" aria-hidden>
                    <path d="M1 7L9 1V6H15V8H9V13Z" />
                  </svg>
                </Button>
                <Button type="button" $w={26} $round $fg="#d0d0d0" aria-label="Next locator">
                  <svg width="16" height="14" viewBox="0 0 16 14" fill="currentColor" aria-hidden>
                    <path d="M15 7L7 1V6H1V8H7V13Z" />
                  </svg>
                </Button>
              </Cluster>
            </Corner>
            <Headers>
              <OuterGroup $bg="#7d7d7d">
                <Nested>
                  <Head h={32} bg={c.red} fg="#ebd3d2" glyph="menu" name="KICk BUS" />
                  <Group $bg={c.blue}>
                    <Head bg={c.blue} fg={ink.blue} glyph="group" name="BASS BUS" />
                    <Nested>
                      <Head bg={c.blue} fg={ink.blue} glyph="down" name="bass" />
                    </Nested>
                  </Group>
                </Nested>
              </OuterGroup>
              <Head h={102} bg={c.green} fg="#26301f" glyph="menu" name="DRUMS BUS" />
              {['riser', 'cymbal roll', 'crash & reverse', 'crash & reverse', 'transition fx'].map((name, i) => (
                <Head key={i} gap={14} bg={c.yellow} fg={ink.yellow} glyph="down" name={name} />
              ))}
              <Head gap={14} bg={c.brown} fg="#2e2823" glyph="down" name="snare roll" />
              <Group $bg={c.purple}>
                <Head bg={c.purple} fg={ink.purple} glyph="group" name="VOCAL BUS" />
                <Nested>
                  <Group $bg={c.purple}>
                    <Head h={138} bg={c.purple} fg={ink.purple} glyph="group" name="MAIN VOCAL G" />
                    <Nested>
                      <Head h={34} bg={c.purple} fg={ink.purple} glyph="play" name="main vocal we" />
                      <Head h={34} bg={c.purple} fg={ink.purple} glyph="play" name="main vocal dr" />
                    </Nested>
                  </Group>
                  <Head h={34} bg={c.magenta} fg={ink.magenta} glyph="play" name="add vox 1" />
                  <Head h={34} bg={c.magenta} fg={ink.magenta} glyph="play" name="add vox 2" />
                  <Head h={34} bg={c.magenta} fg={ink.magenta} glyph="play" name="vocal echo fx (" />
                </Nested>
              </Group>
              <Head gap={14} bg={c.sky} fg="#8ca9cf" glyph="down" name="big riser lead" />
              <Head gap={14} bg={c.pink} fg="#2f1f27" glyph="down" name="big riser lead (f" />
              <MainHead>
                <Head h={34} gap={18} bg="#ffffff" fg="#3a3a3a" glyph="play" name="Main" />
              </MainHead>
            </Headers>
            <Footer>
              <Button type="button" $w={30} $bg="#f2ae60" $fg="#111" aria-label="Waveform view">
                <svg width="20" height="20" viewBox="0 0 20 20" stroke="#161310" strokeWidth="2" aria-hidden>
                  <path d="M2 8V12M6 4V16M10 1V19M14 5V15M18 7V13" />
                </svg>
              </Button>
              <Speed type="text" defaultValue="1.00x" aria-label="Playback speed" />
              <Push $gap={6}>
                <Button type="button" $w={30}>H</Button>
                <Button type="button" $w={30}>W</Button>
              </Push>
            </Footer>
          </div>

          <div>
            <Spacer />
            <Stack>
              {rowHeights.map((h, i) => <EdgeLane key={i} $h={h} />)}
              <EdgeMain $h={34} />
            </Stack>
          </div>
        </Frame>
      </Page>
    </>
  );
}
